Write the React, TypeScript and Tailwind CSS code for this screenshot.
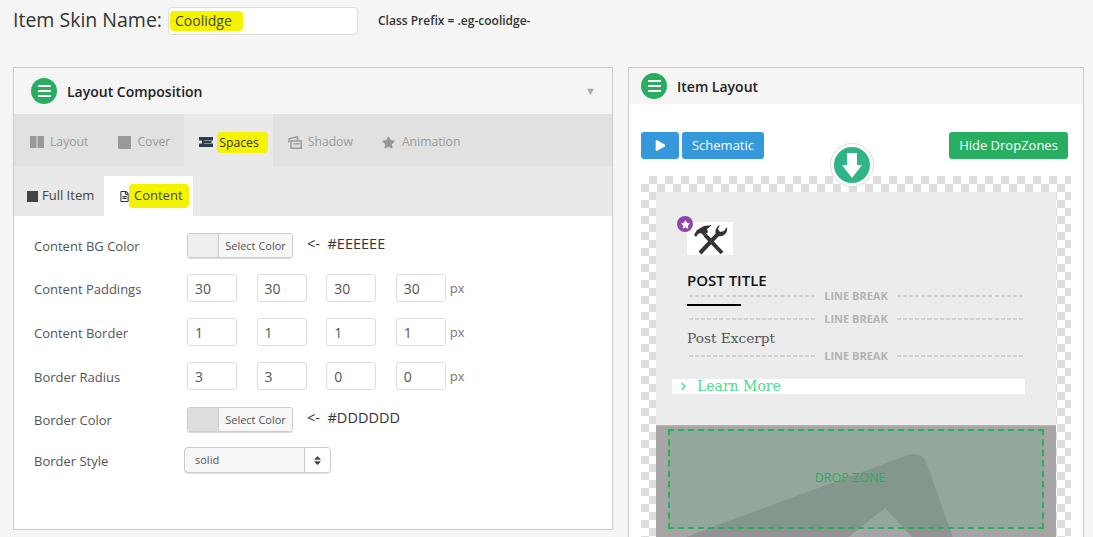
import { FaStar, FaRegFileAlt, FaSort, FaPlay, FaChevronRight } from 'react-icons/fa';

const font = "font-['Open_Sans',sans-serif]";

function Hamburger() {
  return (
    <span className="flex h-[26px] w-[26px] shrink-0 flex-col items-center justify-center gap-[3px] rounded-full bg-[#27ae60]">
      <span className="h-[2px] w-[13px] bg-white" />
      <span className="h-[2px] w-[13px] bg-white" />
      <span className="h-[2px] w-[13px] bg-white" />
    </span>
  );
}

function ColumnsIcon() {
  return (
    <svg width="14" height="12" viewBox="0 0 14 12" fill="#999">
      <path d="M0 0h6.5v12H0zM7.5 0H14v12H7.5z" />
    </svg>
  );
}

function SpacesIcon() {
  return (
    <svg width="14" height="10" viewBox="0 0 14 10">
      <path d="M0 0h14v10H0z" fill="#2e3b4a" />
      <path d="M0 3.5h3v3H0zM5 3.5h9v3H5z" fill="#e9e9e9" />
      <path d="M5 4h7.5v2H5z" fill="#2e3b4a" />
    </svg>
  );
}

function ShadowIcon() {
  return (
    <svg width="14" height="13" viewBox="0 0 14 13" fill="none" stroke="#999" strokeWidth="1.5">
      <path d="M3 5h10.2v7.2H3z" />
      <path d="M1 6.5V2.8L9.5 .8v3.5" />
      <path d="M5.5 7.8h6" />
    </svg>
  );
}

function MainTab({ icon, label, active, mark, first }: { icon: React.ReactNode; label: string; active?: boolean; mark?: boolean; first?: boolean }) {
  return (
    <div className={`flex h-[52px] items-center gap-[6px] pt-[4px] ${first ? 'pl-[16px]' : 'pl-[15px]'} ${mark ? 'pr-[5px]' : 'pr-[14px]'} ${active ? 'bg-[#e9e9e9] text-[#333]' : 'text-[#999]'}`}>
      <span className="flex w-[14px] justify-center">{icon}</span>
      <span className={mark ? '-ml-[2px] rounded-[4px] bg-[#f4f400] py-[2px] pr-[9px] pl-[2px] leading-[17px]' : ''}>{label}</span>
    </div>
  );
}

function NumberRow({ label, values, mt }: { label: string; values: string[]; mt: string }) {
  return (
    <div className={`flex items-center ${mt}`}>
      <span className="w-[153px] pt-[4px] text-[#555]">{label}</span>
      <div className="flex items-center gap-[19.6px]">
        {values.map((v, i) => (
          <input
            key={i}
            readOnly
            value={v}
            className="h-[28px] w-[50px] rounded-[3px] border border-[#ddd] bg-white px-[7px] text-[14px] text-[#555] outline-none"
          />
        ))}
      </div>
      <span className="ml-[4px] pt-[2px] text-[#777]">px</span>
    </div>
  );
}

function ColorRow({ label, color, hex, mt }: { label: string; color: string; hex: string; mt: string }) {
  return (
    <div className={`flex items-center ${mt}`}>
      <span className="w-[153px] pt-[2px] text-[#555]">{label}</span>
      <div className="flex h-[25px] w-[106px] overflow-hidden rounded-[3px] border border-[#ccc] shadow-[0_1px_1px_rgba(0,0,0,0.15)]">
        <span className={`w-[31px] border-r border-[#ccc] ${color}`} />
        <span className="flex-1 bg-[#f7f7f7] text-center text-[11px] leading-[23px] text-[#555]">Select Color</span>
      </div>
      <span className="ml-[14px] -mt-[3px] text-[14.5px] text-[#333]">&lt;-&nbsp; {hex}</span>
    </div>
  );
}

function Dashes() {
  return <span className="h-[2px] flex-1 bg-[repeating-linear-gradient(90deg,#d0d0d0_0_4px,transparent_4px_6.1px)]" />;
}

function LineBreak({ mt }: { mt: string }) {
  return (
    <div className={`flex items-center px-[2px] ${mt}`}>
      <Dashes />
      <span className="w-[82px] text-center text-[11px] leading-[13px] font-bold text-[#b3b3b3]">LINE BREAK</span>
      <Dashes />
    </div>
  );
}

export default function App() {
  return (
    <div className={`h-[537px] w-[1093px] overflow-hidden bg-[#f5f5f5] text-[13px] ${font}`}>
      <div className="flex h-[67px] items-start pl-[13px] pt-[7px]">
        <span className="w-[155px] text-[19.5px] leading-[26px] text-[#333]">Item Skin Name:</span>
        <div className="flex h-[28px] w-[190px] items-center rounded-[4px] border border-[#ddd] bg-white pl-[1px]">
          <span className="rounded-[4px] bg-[#f4f400] py-[1px] pr-[11px] pl-[5px] text-[14px] leading-[18px] text-[#444]">Coolidge</span>
        </div>
        <span className="ml-[20px] pt-[5px] text-[12px] font-semibold text-[#333]">Class Prefix = .eg-coolidge-</span>
      </div>

      <div className="flex items-start pl-[13px]">
        <section className="h-[463px] w-[600px] border border-[#ccc] bg-white">
          <header className="flex h-[46px] items-center gap-[10px] bg-[#f5f5f5] pl-[17px]">
            <Hamburger />
            <h2 className="text-[14px] font-semibold text-[#222]">Layout Composition</h2>
            <span className="mr-[16px] ml-auto text-[11px] text-[#aaa]">▼</span>
          </header>
          <div className="flex bg-[#e1e1e1] text-[12.2px]">
            <MainTab first icon={<ColumnsIcon />} label="Layout" />
            <MainTab icon={<span className="h-[13px] w-[13px] bg-[#999]" />} label="Cover" />
            <MainTab icon={<SpacesIcon />} label="Spaces" active mark />
            <MainTab icon={<ShadowIcon />} label="Shadow" />
            <MainTab icon={<FaStar size={13} color="#999" />} label="Animation" />
          </div>
          <div className="flex h-[50px] items-end bg-[#e9e9e9]">
            <div className="flex h-[40px] w-[90px] items-center gap-[4px] pl-[13px] text-[#444]">
              <span className="h-[11px] w-[11px] bg-[#444]" />
              Full Item
            </div>
            <div className="flex h-[40px] w-[89px] items-center bg-white pl-[15px] text-[#444]">
              <FaRegFileAlt size={11} color="#333" />
              <span className="-ml-[1px] rounded-[4px] bg-[#f4f400] py-[2px] pr-[6px] pl-[5px]">Content</span>
            </div>
          </div>
          <div className="pl-[20px] pt-[17px]">
            <ColorRow label="Content BG Color" color="bg-[#eeeeee]" hex="#EEEEEE" mt="" />
            <NumberRow label="Content Paddings" values={['30', '30', '30', '30']} mt="mt-[16px]" />
            <NumberRow label="Content Border" values={['1', '1', '1', '1']} mt="mt-[16px]" />
            <NumberRow label="Border Radius" values={['3', '3', '0', '0']} mt="mt-[16px]" />
            <ColorRow label="Border Color" color="bg-[#dddddd]" hex="#DDDDDD" mt="mt-[17px]" />
            <div className="mt-[15px] flex items-center">
              <span className="w-[150px] pt-[4px] text-[#555]">Border Style</span>
              <div className="flex h-[26px] w-[147px] overflow-hidden rounded-[4px] border border-[#ccc] bg-[#f7f7f7] shadow-[0_1px_1px_rgba(0,0,0,0.1)]">
                <span className="flex-1 pl-[10px] text-[11px] leading-[24px] text-[#555]">solid</span>
                <span className="flex w-[26px] items-center justify-center border-l border-[#ccc] bg-white">
                  <FaSort size={11} color="#444" />
                </span>
              </div>
            </div>
          </div>
        </section>

        <section className="ml-[15px] h-[480px] w-[456px] border border-[#ccc] bg-white">
          <header className="flex h-[36px] items-center gap-[10px] bg-[#f5f5f5] pl-[12px]">
            <Hamburger />
            <h2 className="text-[14px] font-semibold text-[#222]">Item Layout</h2>
          </header>
          <div className="relative mx-[12px] mt-[28px] flex h-[27px] w-[428px] text-[13px] text-white">
            <span className="flex w-[38px] items-center justify-center rounded-[3px] bg-[#3498db]">
              <FaPlay size={11} />
            </span>
            <span className="ml-[3px] flex w-[82px] items-center justify-center rounded-[3px] bg-[#3498db]">Schematic</span>
            <span className="mr-[1px] ml-auto flex w-[119px] items-center justify-center rounded-[3px] bg-[#27ae60]">Hide DropZones</span>
            <span className="absolute top-[11px] left-[189px] z-10 flex h-[44px] w-[44px] items-center justify-center rounded-full border border-[#ddd] bg-white">
              <span className="flex h-[36px] w-[36px] items-center justify-center rounded-full bg-[#2fb388]">
                <svg width="20" height="25" viewBox="0 0 20 25" fill="#fff">
                  <path d="M5 0h10v12h5L10 25 0 12h5z" />
                </svg>
              </span>
            </span>
          </div>
          <div className="mx-[12px] mt-[17px] h-[400px] w-[430px] bg-[conic-gradient(#dddddd_25%,#ffffff_0_50%,#dddddd_0_75%,#ffffff_0)] bg-[length:16px_16px] px-[15px] pt-[16px]">
            <div className="h-[233px] rounded-t-[2px] bg-[#ececec] px-[31px] pt-[30px]">
              <div className="relative h-[33px] w-[46px] bg-white">
                <svg className="absolute top-0 left-0" width="46" height="33" viewBox="0 0 46 33" fill="none">
                  <path d="M7 13 L10 8 L17 4 L25 3 L20 7 L21 10 L17 14 L14 11 L11 12 L9 15z" fill="#333" />
                  <path d="M18 13 L35 31" stroke="#333" strokeWidth="4" />
                  <path d="M13 31 L31 12" stroke="#333" strokeWidth="4" />
                  <path d="M33 3 L31 7 L33 10 L37 9 L40 5 Q41 10 37 13 Q34 15 31 14 Q27 11 29 7 Q30 4 33 3z" fill="#333" />
                </svg>
                <span className="absolute -top-[6px] -left-[10px] flex h-[16px] w-[16px] items-center justify-center rounded-full bg-[#8e44ad]">
                  <FaStar size={9} color="#fff" />
                </span>
              </div>
              <h3 className="mt-[15px] text-[15px] leading-[20px] font-semibold text-[#111]">POST TITLE</h3>
              <LineBreak mt="-mt-[1px]" />
              <div className="mt-[2px] h-[2px] w-[54px] bg-black" />
              <LineBreak mt="mt-[6px]" />
              <p className="mt-[2px] font-['DejaVu_Serif',serif] text-[13.7px] leading-[22px] text-[#555]">Post Excerpt</p>
              <LineBreak mt="mt-0" />
              <div className="-ml-[15px] mt-[17px] flex h-[15px] w-[353px] items-center bg-white pl-[7px] font-['DejaVu_Serif',serif] text-[14px] text-[#4fdc8a]">
                <FaChevronRight size={9} />
                <span className="ml-[9px]">Learn More</span>
              </div>
            </div>
            <div className="relative h-[151px] overflow-hidden border-t border-[#b5b5b5] bg-[#a6a6a6]">
              <svg className="absolute top-0 left-0" width="400" height="112" viewBox="0 0 400 112">
                <path
                  fillRule="evenodd"
                  d="M27 112 L252 29 Q266 25 271 38 L297 112z M229 82 L191 112 L257 112z"
                  fill="#000"
                  opacity="0.11"
                />
              </svg>
              <div className="absolute top-[3px] left-[12px] flex h-[100px] w-[376px] items-center justify-center border-2 border-dashed border-[#27ae60] bg-[#27ae60]/14 pr-[12px] pb-[2px] text-[12.5px] text-[#27ae60]">
                DROP ZONE
              </div>
            </div>
          </div>
        </section>
      </div>
    </div>
  );
}
